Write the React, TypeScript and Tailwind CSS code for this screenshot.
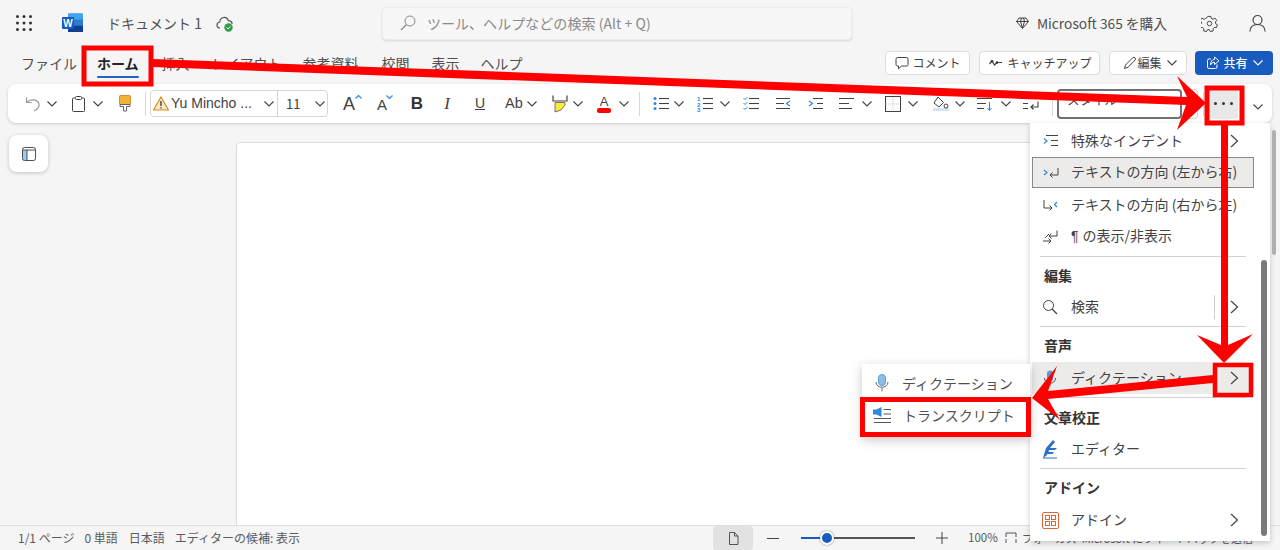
import React from "react";

const FONT = { fontFamily: '"Noto Sans CJK JP", "Liberation Sans", sans-serif' };
const LATIN = { fontFamily: '"Liberation Sans", sans-serif' };

function Sv({ w = 16, h = 16, vb, className = "", children }: { w?: number; h?: number; vb?: string; className?: string; children: React.ReactNode }) {
  return (
    <svg width={w} height={h} viewBox={vb ?? `0 0 ${w} ${h}`} fill="none" stroke="#424242" strokeWidth={1} className={`shrink-0 ${className}`}>
      {children}
    </svg>
  );
}

function Chev({ className = "" }: { className?: string }) {
  return (
    <Sv w={10} h={6} className={className}>
      <path d="M0.5 0.5 L5 5 L9.5 0.5" strokeWidth={1.1} />
    </Sv>
  );
}

function ChevR({ className = "" }: { className?: string }) {
  return (
    <Sv w={9} h={14} className={className}>
      <path d="M1 1 L7.5 7 L1 13" strokeWidth={1.2} stroke="#444" />
    </Sv>
  );
}

function Lines({ x = 6, n = 3 }: { x?: number; n?: number }) {
  return (
    <>
      {[2.5, 7.5, 12.5].slice(0, n).map((y) => (
        <path key={y} d={`M${x} ${y} H16`} strokeWidth={1.1} />
      ))}
    </>
  );
}

function Tab({ children, active }: { children: React.ReactNode; active?: boolean }) {
  return (
    <div className={`relative h-[34px] flex items-center text-[14px] whitespace-nowrap ${active ? "font-bold text-[#242424]" : "text-[#505050]"}`}>
      {children}
      {active && <div className="absolute left-0 right-0 bottom-[2px] h-[2px] bg-[#2563c4] rounded-full" />}
    </div>
  );
}

function HeaderButton({ icon, label, chev, className = "" }: { icon: React.ReactNode; label: string; chev?: boolean; className?: string }) {
  return (
    <div className={`h-[24px] flex items-center rounded-[4px] border border-[#dcdcdc] bg-white text-[12px] text-[#424242] whitespace-nowrap ${className}`}>
      {icon}
      <span>{label}</span>
      {chev && <Chev className="ml-[4px]" />}
    </div>
  );
}

function MenuRow({ icon, label, chevron, split, selected, hover }: { icon: React.ReactNode; label: React.ReactNode; chevron?: boolean; split?: boolean; selected?: boolean; hover?: boolean }) {
  return (
    <div
      className={`relative ml-[2px] w-[222px] flex items-center text-[14px] text-[#424242] whitespace-nowrap ${
        selected ? "h-[31px] mb-px bg-[#edebe9] border border-[#8a8886]" : hover ? "h-[32px] bg-[#edebe9]" : "h-[32px]"
      }`}
    >
      <div className={`pl-[10px] flex items-center shrink-0 ${selected ? "w-[38px]" : "w-[39px]"}`}>{icon}</div>
      <span className="mb-[2px]">{label}</span>
      {chevron && <ChevR className="absolute left-[198px] top-[9px]" />}
      {split && <div className="absolute left-[182px] top-[4px] w-px h-[24px] bg-[#d0d0d0]" />}
    </div>
  );
}

function MenuHead({ children, h = 32 }: { children: React.ReactNode; h?: number }) {
  return (
    <div className="ml-[14px] flex items-center text-[14px] font-bold text-[#333]" style={{ height: h }}>
      {children}
    </div>
  );
}

function MenuDiv({ h = 6 }: { h?: number }) {
  return (
    <div className="flex items-center ml-[10px] w-[206px]" style={{ height: h }}>
      <div className="w-full h-px bg-[#d2d2d2]" />
    </div>
  );
}

export default function App() {
  return (
    <div className="relative w-[1280px] h-[550px] overflow-hidden bg-[#f5f5f5] flex flex-col" style={FONT}>
      {/* Title bar */}
      <div className="h-[46px] flex items-center shrink-0">
        <Sv w={16} h={16} className="ml-[16px]">
          {[1.5, 8, 14.5].flatMap((y) => [1.5, 8, 14.5].map((x) => <circle key={`${x}-${y}`} cx={x} cy={y} r={1.5} fill="#333" stroke="none" />))}
        </Sv>
        <svg width="22" height="20" viewBox="0 0 22 20" className="ml-[30px] shrink-0">
          <rect x="6" y="0.5" width="15" height="18.5" rx="1.5" fill="#2b7cd3" />
          <rect x="6" y="0.5" width="15" height="6" fill="#41a5ee" />
          <rect x="6" y="12.7" width="15" height="6.3" fill="#103f91" />
          <rect x="0" y="4" width="12" height="12" rx="1" fill="#185abd" />
          <text x="6" y="13.5" fontSize="10" fontWeight="700" textAnchor="middle" fill="#fff" fontFamily="Liberation Sans">W</text>
        </svg>
        <span className="ml-[23px] text-[14px] text-[#505050] whitespace-nowrap">ドキュメント 1</span>
        <svg width="18" height="17" viewBox="0 0 18 17" className="ml-[14px] shrink-0">
          <path d="M4 13 C0.2 13 0 7.5 3.8 7 C4.2 1.5 11 1 12.3 5.6 C15 5.6 16.3 7.5 16 9" fill="none" stroke="#555" strokeWidth="1.2" />
          <circle cx="12.5" cy="12.5" r="4.2" fill="#2f9e44" />
          <path d="M10.5 12.5 L12 14 L14.5 11.3" fill="none" stroke="#fff" strokeWidth="1" />
        </svg>
        <div className="ml-[148px] w-[470px] h-[33px] rounded-[4px] bg-[#f7f7f7] border border-[#ececec] shadow-[0_1px_2px_rgba(0,0,0,0.12)] flex items-center pl-[17px] text-[14px] text-[#8a8a8a] whitespace-nowrap">
          <Sv w={16} h={16}>
            <circle cx="10" cy="6" r="5" stroke="#8a8a8a" />
            <path d="M6.5 9.5 L1 15" stroke="#8a8a8a" strokeWidth={1.3} />
          </Sv>
          <span className="ml-[11px] tracking-[0.05px]">ツール、ヘルプなどの検索 (Alt + Q)</span>
        </div>
        <Sv w={13} h={12} className="ml-[164px]">
          <path d="M3 1 H10 L12.5 4.5 L6.5 11.5 L0.5 4.5 Z M0.5 4.5 H12.5 M4.5 4.5 L6.5 11 L8.5 4.5 M4.5 4.5 L5.5 1 M8.5 4.5 L7.5 1" />
        </Sv>
        <span className="ml-[8px] w-[131px] text-[13.75px] text-[#505050] whitespace-nowrap">Microsoft 365 を購入</span>
        <Sv w={17} h={17} className="ml-[33px]" vb="0 0 24 24">
          <circle cx="12" cy="12" r="3.2" strokeWidth={1.3} />
          <path strokeWidth={1.4} d="M10 2 h4 l.6 3 2.3 1 2.7-1.6 2.8 3.3-2 2.2 .3 2.4 2.4 1.5-1.2 4-3-.2-1.8 1.8 .1 3-4 1-1.4-2.7h-2.6l-1.4 2.7-4-1 .1-3-1.8-1.8-3 .2-1.2-4 2.4-1.5 .3-2.4-2-2.2 2.8-3.3 2.7 1.6 2.3-1z" />
        </Sv>
        <Sv w={17} h={18} className="ml-[31px]">
          <circle cx="8.5" cy="6" r="4.5" strokeWidth={1.2} />
          <path d="M1 17.5 C1 12.5 4 10.5 8.5 10.5 C13 10.5 16 12.5 16 17.5" strokeWidth={1.2} />
        </Sv>
      </div>

      {/* Tabs row */}
      <div className="h-[34px] flex items-center pl-[21px] shrink-0">
        <Tab>ファイル</Tab>
        <div className="ml-[20px]"><Tab active>ホーム</Tab></div>
        <div className="ml-[23px]"><Tab>挿入</Tab></div>
        <div className="ml-[22px]"><Tab>レイアウト</Tab></div>
        <div className="ml-[21px]"><Tab>参考資料</Tab></div>
        <div className="ml-[23px]"><Tab>校閲</Tab></div>
        <div className="ml-[22px]"><Tab>表示</Tab></div>
        <div className="ml-[21px]"><Tab>ヘルプ</Tab></div>
        <HeaderButton
          className="ml-[362px] w-[85px] pl-[9px] gap-[4px]"
          label="コメント"
          icon={
            <Sv w={14} h={14}>
              <path d="M2.5 1.5 H11.5 Q13 1.5 13 3 V8.5 Q13 10 11.5 10 H6.5 L3.5 12.8 V10 H2.5 Q1 10 1 8.5 V3 Q1 1.5 2.5 1.5 Z" />
            </Sv>
          }
        />
        <HeaderButton
          className="ml-[9px] w-[121px] pl-[9px] gap-[5px]"
          label="キャッチアップ"
          icon={
            <Sv w={14} h={10}>
              <path d="M0.5 6 L3 3 L5.5 7 L8 4.5 H13" strokeWidth={1.2} />
              <circle cx="3" cy="3.2" r="1" fill="#424242" />
              <circle cx="8" cy="4.6" r="1" fill="#424242" />
            </Sv>
          }
        />
        <HeaderButton
          className="ml-[9px] w-[78px] pl-[13px] gap-[1px]"
          label="編集"
          chev
          icon={
            <Sv w={14} h={14}>
              <path d="M1.5 12.5 L2.5 9 L10 1.5 Q11 0.8 12 1.8 Q13 3 12.2 3.9 L5 11.3 Z" />
            </Sv>
          }
        />
        <div className="ml-[8px] w-[78px] h-[24px] rounded-[4px] bg-[#185abd] flex items-center pl-[11px] gap-[4px] text-[12px] font-medium text-white whitespace-nowrap">
          <Sv w={14} h={14}>
            <path d="M11 8.5 V11 Q11 12.5 9.5 12.5 H3 Q1.5 12.5 1.5 11 V4.5 Q1.5 3 3 3 H5 M8.5 1 L13 4.8 L8.5 8.5 V6.3 C6.5 6.3 5.2 7.3 4.5 9 C4.5 6 6 3.5 8.5 3.3 Z" stroke="#fff" />
          </Sv>
          <span>共有</span>
          <Sv w={10} h={6} className="ml-[1px]"><path d="M0.5 0.5 L5 5 L9.5 0.5" stroke="#fff" strokeWidth={1.1} /></Sv>
        </div>
      </div>

      {/* Ribbon */}
      <div className="mt-[4px] mx-[8px] w-[1264px] h-[39px] rounded-[8px] bg-white shadow-[0_1px_3px_rgba(0,0,0,0.18)] flex items-center shrink-0">
        <Sv className="ml-[17px]">
          <g stroke="#9a9a9a" strokeWidth={1.2}>
            <path d="M1.5 1.5 V6.5 H6.5" />
            <path d="M1.8 6.3 C5 2.5 13 3 14 8 C14.6 11 12 13.5 9 15" />
          </g>
        </Sv>
        <Chev className="ml-[6px]" />
        <Sv h={18} className="ml-[14px]">
          <path d="M4 3 H2.5 Q1.5 3 1.5 4 V15.5 Q1.5 16.5 2.5 16.5 H12.5 Q13.5 16.5 13.5 15.5 V4 Q13.5 3 12.5 3 H11" />
          <rect x="4.5" y="1.5" width="6" height="3" rx="1" />
        </Sv>
        <Chev className="ml-[6px]" />
        <svg width="14" height="17" viewBox="0 0 14 17" className="ml-[15px] shrink-0">
          <rect x="1.5" y="0.5" width="11" height="9" rx="1" fill="#f2b233" stroke="#c77f10" strokeWidth="0.8" />
          <path d="M2 9.5 H12 V11.5 H8.5 V16 H5.5 V11.5 H2 Z" fill="#fff" stroke="#555" strokeWidth="0.9" />
        </svg>
        <div className="ml-[13px] w-px h-[24px] bg-[#d8d8d8]" />
        <div className="ml-[4px] w-[178px] h-[27px] rounded-[4px] border border-[#d6d6d6] flex items-center text-[14px] text-[#424242] whitespace-nowrap">
          <svg width="16" height="15" viewBox="0 0 16 15" className="ml-[2px] shrink-0">
            <path d="M8 1 L15.5 14 H0.5 Z" fill="#fde9c9" stroke="#d98b1b" strokeWidth="1.2" />
            <path d="M8 5 V10 M8 11.3 V12.6" stroke="#333" strokeWidth="1.3" />
          </svg>
          <span className="ml-[2px] w-[93px] text-[14px]" style={LATIN}>Yu Mincho ...</span>
          <Chev />
          <div className="ml-[3px] w-px h-[25px] bg-[#d6d6d6]" />
          <span className="ml-[8px] w-[29px] text-[13px]">11</span>
          <Chev />
        </div>
        <div className="ml-[15px] w-[19px] relative h-[20px] text-[18px] leading-[20px] text-[#424242]" style={LATIN}>
          A
          <Sv w={7} h={4} className="absolute right-0 top-[1px]"><path d="M0.5 3.5 L3.5 0.5 L6.5 3.5" stroke="#2e89d8" strokeWidth={1.2} /></Sv>
        </div>
        <div className="ml-[15px] w-[16px] relative h-[20px] text-[15px] leading-[22px] text-[#424242]" style={LATIN}>
          A
          <Sv w={7} h={4} className="absolute right-0 top-[1px]"><path d="M0.5 0.5 L3.5 3.5 L6.5 0.5" stroke="#2e89d8" strokeWidth={1.2} /></Sv>
        </div>
        <span className="ml-[16px] w-[16px] text-[17px] font-bold text-[#333] text-center" style={LATIN}>B</span>
        <span className="ml-[14px] w-[16px] text-[17px] italic text-[#424242] text-center" style={{ fontFamily: '"Liberation Serif", serif' }}>I</span>
        <span className="ml-[17px] w-[16px] text-[14px] underline text-[#424242] text-center" style={LATIN}>U</span>
        <span className="ml-[17px] w-[17px] text-[14.5px] text-[#424242]" style={LATIN}>Ab</span>
        <Chev className="ml-[5px]" />
        <svg width="16" height="18" viewBox="0 0 16 18" className="ml-[15px] shrink-0">
          <path d="M3 7.5 H13 V10 L9 15 L3 17 Z" fill="#ffeb3b" stroke="#555" strokeWidth="0.8" />
          <path d="M1 0.5 V6 H15 V0.5" stroke="#424242" strokeWidth="1.2" fill="none" />
        </svg>
        <Chev className="ml-[5px]" />
        <div className="ml-[13px] w-[16px] flex flex-col items-center">
          <span className="text-[13px] leading-[13px] text-[#424242]" style={LATIN}>A</span>
          <div className="w-[14px] h-[5px] rounded-[2px] bg-[#f00]" />
        </div>
        <Chev className="ml-[7px]" />
        <div className="ml-[10px] w-px h-[24px] bg-[#d8d8d8]" />
        <Sv className="ml-[13px]">
          <circle cx="2" cy="2.5" r="1.5" fill="#2e89d8" stroke="none" />
          <circle cx="2" cy="7.5" r="1.5" fill="#2e89d8" stroke="none" />
          <circle cx="2" cy="12.5" r="1.5" fill="#2e89d8" stroke="none" />
          <Lines />
        </Sv>
        <Chev className="ml-[5px]" />
        <Sv className="ml-[13px]">
          <g fill="#2e89d8" stroke="none" fontSize="6" fontWeight="700" fontFamily="Liberation Sans">
            <text x="0" y="5">1</text>
            <text x="0" y="10.5">2</text>
            <text x="0" y="16">3</text>
          </g>
          <Lines />
        </Sv>
        <Chev className="ml-[7px]" />
        <Sv className="ml-[13px]">
          <g stroke="#2e89d8" strokeWidth={1}>
            <path d="M0.5 2 L2 3.5 L4.5 1" />
            <path d="M0.5 7 L2 8.5 L4.5 6" />
            <path d="M0.5 12 L2 13.5 L4.5 11" />
          </g>
          <Lines />
        </Sv>
        <Sv className="ml-[17px]">
          <path d="M0 2.5 H14 M0 7.5 H8 M0 12.5 H14" strokeWidth={1.1} />
          <path d="M14 5 L10.5 7.5 L14 10" stroke="#2e89d8" strokeWidth={1.2} />
        </Sv>
        <Sv className="ml-[16px]">
          <path d="M5 2.5 H15 M9 7.5 H15 M5 12.5 H15" strokeWidth={1.1} />
          <path d="M1 5 L4.5 7.5 L1 10" stroke="#2e89d8" strokeWidth={1.2} />
        </Sv>
        <Sv className="ml-[15px]">
          <path d="M0 2.5 H15 M0 7.5 H10 M0 12.5 H13" strokeWidth={1.1} />
        </Sv>
        <Chev className="ml-[7px]" />
        <Sv className="ml-[13px]">
          <rect x="0.5" y="0.5" width="15" height="15" />
          <path d="M8 1 V15 M1 8 H15" stroke="#c4c4c4" strokeDasharray="1 1" />
        </Sv>
        <Chev className="ml-[7px]" />
        <svg width="16" height="16" viewBox="0 0 16 16" className="ml-[15px] shrink-0">
          <rect x="0" y="12" width="16" height="3" fill="#cfe4f7" />
          <path d="M5 1 L10.5 6.5 L6 11 L1 7 Z" fill="none" stroke="#424242" />
          <circle cx="13" cy="10" r="2" fill="none" stroke="#424242" />
        </svg>
        <Chev className="ml-[6px]" />
        <Sv className="ml-[12px]">
          <path d="M0 2.5 H15 M0 7.5 H9 M0 12.5 H7" strokeWidth={1.1} />
          <path d="M12.5 6 V14 M10.5 12 L12.5 14.5 L14.5 12" stroke="#2e89d8" />
        </Sv>
        <Chev className="ml-[8px]" />
        <Sv className="ml-[12px]">
          <path d="M0 2.5 H16 M0 7.5 H5 M0 12.5 H5" strokeWidth={1.1} />
          <path d="M15 5.5 V11 H8 M10.5 8.5 L8 11 L10.5 13.5" strokeWidth={1.1} />
        </Sv>
        <div className="ml-[13px] w-px h-[24px] bg-[#d8d8d8]" />
        <div className="ml-[4px] w-[125px] h-[30px] rounded-[4px] border-2 border-[#707070] flex items-center pl-[8px] text-[12.5px] text-[#424242] whitespace-nowrap">
          <span className="mb-[7px]">スタイル</span>
        </div>
        <div className="w-[16px] h-[30px] rounded-r-[4px] border border-l-0 border-[#d6d6d6]" />
        <div className="ml-[5px] w-px h-[24px] bg-[#d8d8d8]" />
        <div className="ml-[5px] w-[29px] h-[30px] rounded-[3px] bg-[#e8e8e8] flex items-center justify-center gap-[5px]">
          <span className="w-[3px] h-[3px] rounded-full bg-[#333]" />
          <span className="w-[3px] h-[3px] rounded-full bg-[#333]" />
          <span className="w-[3px] h-[3px] rounded-full bg-[#333]" />
        </div>
        <Chev className="ml-[15px] mt-[6px]" />
      </div>

      {/* Workspace */}
      <div className="flex-1 flex min-h-0 mt-[12px]">
        <div className="ml-[9px] w-[39px] h-[37px] rounded-[8px] bg-white shadow-[0_1px_4px_rgba(0,0,0,0.2)] flex items-center justify-center shrink-0">
          <svg width="14" height="14" viewBox="0 0 14 14">
            <rect x="1" y="3" width="4" height="10" fill="#9cc9ee" />
            <rect x="0.5" y="0.5" width="13" height="13" rx="2" fill="none" stroke="#505050" />
            <path d="M0.5 3 H13.5 M5 3 V13.5" fill="none" stroke="#505050" />
          </svg>
        </div>
        <div className="ml-[188px] mt-[7px] w-[800px] bg-white border border-b-0 border-[#dcdcdc] rounded-tl-[4px]" />
      </div>

      {/* Status bar */}
      <div className="h-[25px] shrink-0 border-t border-[#e0e0e0] bg-[#f5f5f5] flex items-center text-[12px] text-[#5a5a5a] whitespace-nowrap">
        <span className="ml-[18px]">1/1 ページ</span>
        <span className="ml-[10px]">0 単語</span>
        <span className="ml-[11px]">日本語</span>
        <span className="ml-[10px]">エディターの候補: 表示</span>
        <div className="ml-[413px] w-[40px] h-[24px] bg-[#e2e2e2] rounded-[3px] flex items-center justify-center">
          <Sv w={11} h={13}><path d="M1.5 0.5 H6.5 L10 4 V12.5 H1.5 Z M6.5 0.5 V4 H10" stroke="#555" /></Sv>
        </div>
        <div className="ml-[14px] w-[12px] h-px bg-[#444]" />
        <div className="ml-[22px] w-[114px] h-[2px] bg-[#555] relative">
          <div className="absolute left-0 top-0 h-[2px] w-[20px] bg-[#185abd]" />
          <div className="absolute left-[19px] top-[-6px] w-[14px] h-[14px] rounded-full bg-[#185abd] border-2 border-white shadow-[0_0_2px_rgba(0,0,0,0.5)]" />
        </div>
        <Sv w={12} h={12} className="ml-[21px]"><path d="M6 0 V12 M0 6 H12" /></Sv>
        <span className="ml-[20px] text-[11.5px]">100%</span>
        <Sv w={12} h={12} className="ml-[7px]">
          <path d="M1 5 V1 H11 V5 M1 7 V11 M11 7 V11" stroke="#555" />
        </Sv>
        <span className="ml-[5px] text-[11px]">フォーカス</span>
        <span className="ml-[5px] text-[11px]">Microsoft にフィードバックを送信</span>
      </div>

      {/* Overflow menu */}
      <div className="absolute left-[1030px] top-[123px] w-[240px] h-[418px] pt-[2px] bg-white shadow-[0_2px_6px_rgba(0,0,0,0.2)]">
        <MenuRow
          label="特殊なインデント"
          chevron
          icon={
            <Sv>
              <path d="M4 2.5 H16 M9 7.5 H16 M9 12.5 H16" strokeWidth={1} />
              <path d="M2 5.5 L5 8 L2 10.5" stroke="#2e89d8" strokeWidth={1.2} />
            </Sv>
          }
        />
        <MenuRow
          label="テキストの方向 (左から右)"
          selected
          icon={
            <Sv>
              <path d="M1 5 L4 7.5 L1 10" stroke="#2e89d8" strokeWidth={1.2} />
              <path d="M15 3 V10 H7 M9.5 7.5 L7 10 L9.5 12.5" />
            </Sv>
          }
        />
        <MenuRow
          label="テキストの方向 (右から左)"
          icon={
            <Sv>
              <path d="M2 3 V11 H10 M7.5 8.5 L10 11 L7.5 13.5" />
              <path d="M15 5 L12.5 7.5 L15 10" stroke="#2e89d8" strokeWidth={1.2} />
            </Sv>
          }
        />
        <MenuRow
          label={<><span className="mr-[4px]" style={LATIN}>¶</span>の表示/非表示</>}
          icon={
            <Sv>
              <path d="M15 1.5 V7 H7 M9.5 4.5 L7 7 L9.5 9.5" />
              <path d="M1 12 H9 M6.5 9.5 L9 12 L6.5 14.5 M3 9 L7 5" />
            </Sv>
          }
        />
        <MenuDiv />
        <MenuHead>編集</MenuHead>
        <MenuRow
          label="検索"
          chevron
          split
          icon={
            <Sv>
              <circle cx="6.5" cy="6.5" r="5" />
              <path d="M10 10 L15 15" strokeWidth={1.2} />
            </Sv>
          }
        />
        <MenuDiv />
        <MenuHead h={33}>音声</MenuHead>
        <MenuRow
          label="ディクテーション"
          hover
          chevron
          icon={
            <svg width="16" height="17" viewBox="0 0 16 17">
              <rect x="5" y="0.5" width="6" height="11" rx="3" fill="#5b9bd8" />
              <path d="M2.5 8 C2.5 15 13.5 15 13.5 8 M8 13 V16.5" fill="none" stroke="#555" />
            </svg>
          }
        />
        <MenuDiv h={7} />
        <MenuHead>文章校正</MenuHead>
        <MenuRow
          label="エディター"
          icon={
            <svg width="20" height="20" viewBox="0 0 20 20" className="shrink-0">
              <path d="M1 19 L4 9 L11 1 L13 3 L8 9 H15 L13 11 H7 L6.5 13 H12 L10.5 15 H5.5 L4 17 Z" fill="#2b6fc6" />
              <path d="M1 19 H15" stroke="#2b6fc6" strokeWidth="1" />
            </svg>
          }
        />
        <MenuDiv />
        <MenuHead>アドイン</MenuHead>
        <div className="mt-px">
          <MenuRow
            label="アドイン"
            chevron
            icon={
              <svg width="17" height="17" viewBox="0 0 17 17">
                <rect x="0.5" y="0.5" width="16" height="16" rx="1.5" fill="none" stroke="#d9653a" />
                <g fill="none" stroke="#d9653a">
                  <rect x="3.5" y="3.5" width="4" height="4" />
                  <rect x="9.5" y="3.5" width="4" height="4" />
                  <rect x="3.5" y="9.5" width="4" height="4" />
                  <rect x="9.5" y="9.5" width="4" height="4" />
                </g>
              </svg>
            }
          />
        </div>
        {/* menu scrollbar */}
        <div className="absolute left-[231px] top-[137px] w-[6px] h-[276px] rounded-full bg-[#7a7a7a]" />
      </div>

      {/* Page scrollbar */}
      <div className="absolute left-[1272px] top-[130px] w-[4px] h-[125px] rounded-full bg-[#b0b0b0]" />

      {/* Sub menu */}
      <div className="absolute left-[862px] top-[364px] w-[168px] h-[73px] pt-[3px] bg-white shadow-[0_3px_10px_rgba(0,0,0,0.22)] text-[14px] text-[#505050] whitespace-nowrap">
        <div className="h-[32px] flex items-center pl-[12px]">
          <svg width="16" height="18" viewBox="0 0 16 18" className="shrink-0">
            <rect x="4.5" y="0.5" width="7" height="11" rx="3.5" fill="#8dbde8" stroke="#5b9bd8" />
            <path d="M2 8 C2 15 14 15 14 8 M8 14 V17.5" fill="none" stroke="#666" />
          </svg>
          <span className="ml-[12px]">ディクテーション</span>
        </div>
        <div className="h-[33px] flex items-center pl-[11px]">
          <svg width="19" height="17" viewBox="0 0 19 17" className="shrink-0">
            <path d="M0 2.5 H3.5 L8.5 0 V10 L3.5 7.5 H0 Z" fill="#2e89d8" />
            <path d="M10.5 2.5 H18 M10.5 7 H18 M1 11.5 H18 M1 15.5 H18" stroke="#555" />
          </svg>
          <span className="ml-[11px] mb-[1px]">トランスクリプト</span>
        </div>
      </div>

      {/* Red annotations */}
      <svg width="1280" height="550" viewBox="0 0 1280 550" className="absolute left-0 top-0 pointer-events-none" fill="none">
        <rect x="84" y="48" width="67" height="36" stroke="#f00" strokeWidth="5" />
        <rect x="1207" y="88" width="35" height="35" stroke="#f00" strokeWidth="5" />
        <rect x="1215" y="365" width="36" height="30" stroke="#f00" strokeWidth="4.5" />
        <rect x="862.5" y="399.5" width="166" height="35" stroke="#f00" strokeWidth="5" />
        <polygon fill="#f00" points="153,59 153,67 1186,105 1177,130 1206,103 1177,76 1187,97" />
        <polygon fill="#f00" points="1221,125 1228,125 1228,345 1253,334 1224,363 1197,335 1221,345" />
        <polygon fill="#f00" points="1213,375 1213,383 1048,399 1060,420 1032,398 1057,366 1048,391" />
      </svg>
    </div>
  );
}
